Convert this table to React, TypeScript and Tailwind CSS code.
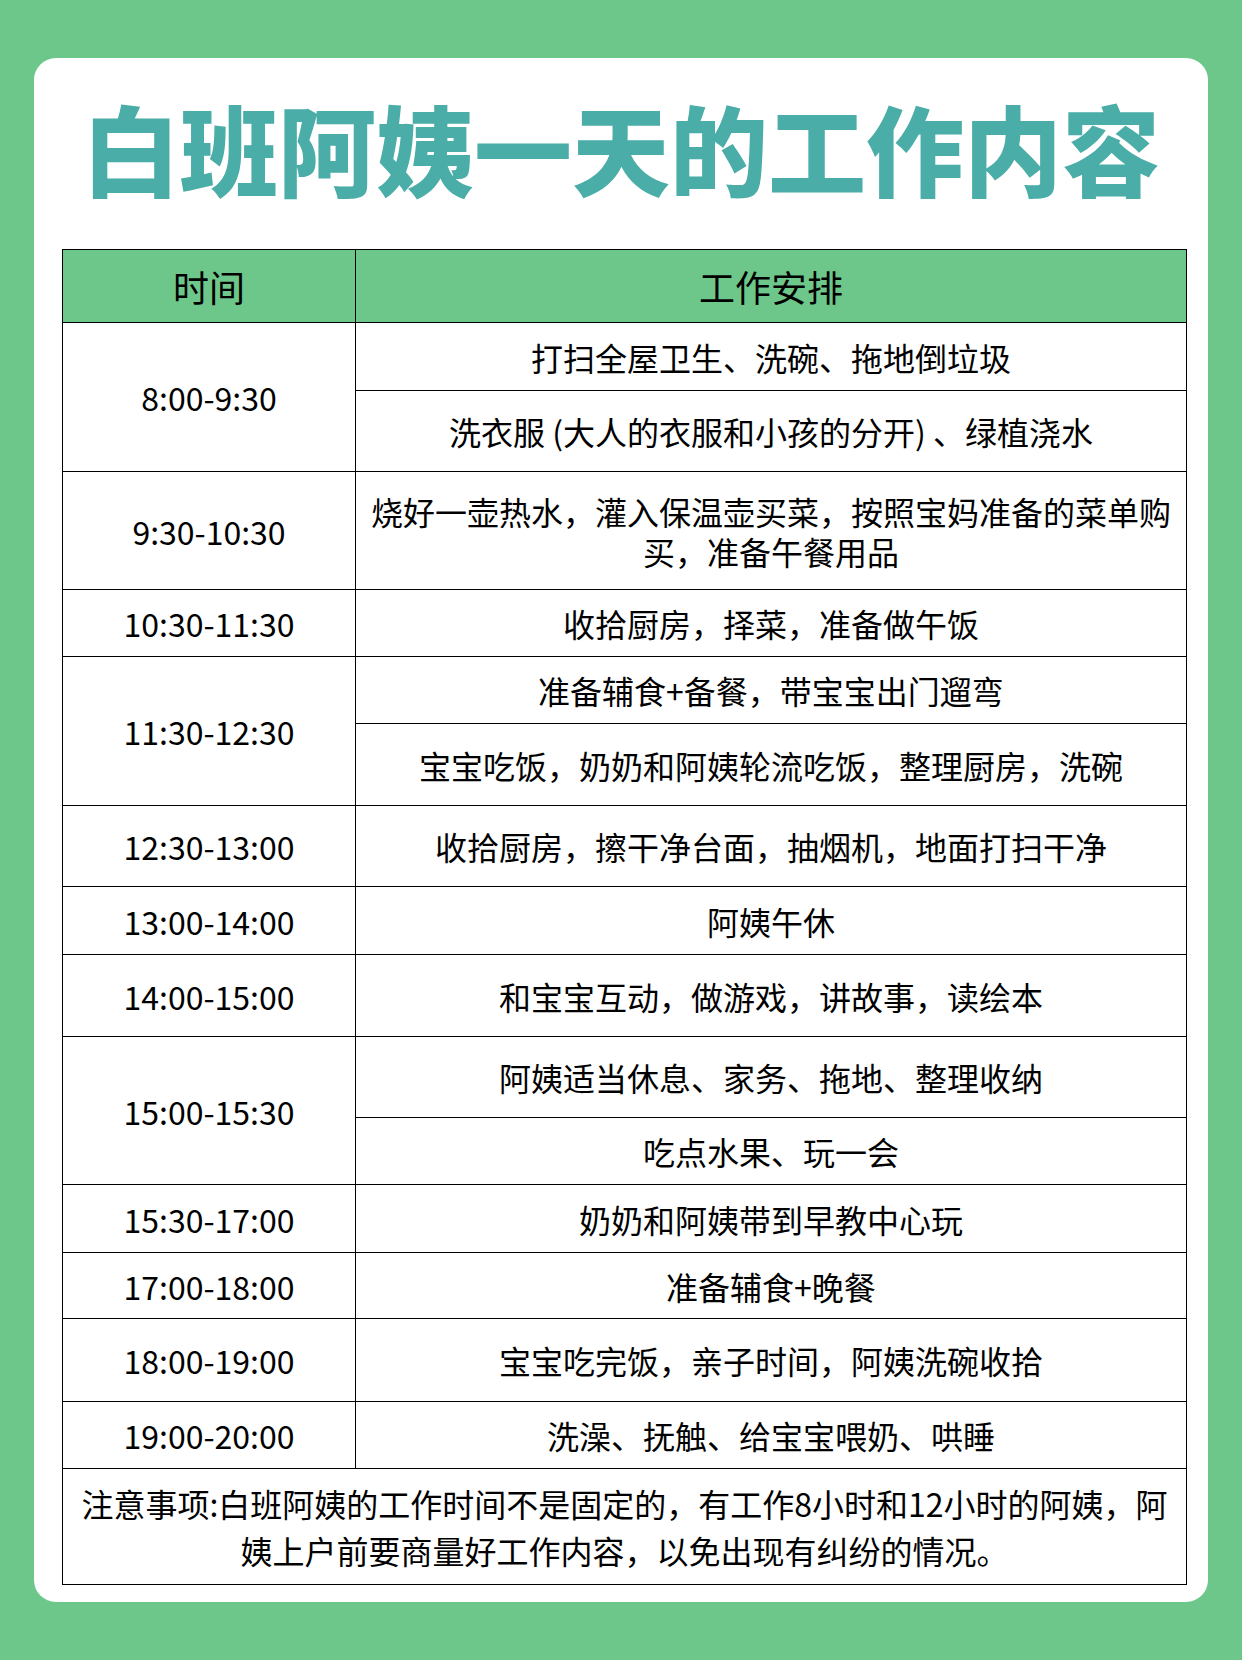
import React from "react";

type Group = { time: string; items: { text: React.ReactNode; h: number; lh?: string }[] };

const groups: Group[] = [
  { time: "8:00-9:30", items: [
    { text: "打扫全屋卫生、洗碗、拖地倒垃圾", h: 68 },
    { text: "洗衣服 (大人的衣服和小孩的分开) 、绿植浇水", h: 80 },
  ] },
  { time: "9:30-10:30", items: [
    { text: <>烧好一壶热水，灌入保温壶买菜，按照宝妈准备的菜单购<br />买，准备午餐用品</>, h: 117, lh: "leading-[40px]" },
  ] },
  { time: "10:30-11:30", items: [{ text: "收拾厨房，择菜，准备做午饭", h: 66 }] },
  { time: "11:30-12:30", items: [
    { text: "准备辅食+备餐，带宝宝出门遛弯", h: 67 },
    { text: "宝宝吃饭，奶奶和阿姨轮流吃饭，整理厨房，洗碗", h: 81 },
  ] },
  { time: "12:30-13:00", items: [{ text: "收拾厨房，擦干净台面，抽烟机，地面打扫干净", h: 80 }] },
  { time: "13:00-14:00", items: [{ text: "阿姨午休", h: 67 }] },
  { time: "14:00-15:00", items: [{ text: "和宝宝互动，做游戏，讲故事，读绘本", h: 81 }] },
  { time: "15:00-15:30", items: [
    { text: "阿姨适当休息、家务、拖地、整理收纳", h: 81 },
    { text: "吃点水果、玩一会", h: 66 },
  ] },
  { time: "15:30-17:00", items: [{ text: "奶奶和阿姨带到早教中心玩", h: 67 }] },
  { time: "17:00-18:00", items: [{ text: "准备辅食+晚餐", h: 65 }] },
  { time: "18:00-19:00", items: [{ text: "宝宝吃完饭，亲子时间，阿姨洗碗收拾", h: 82 }] },
  { time: "19:00-20:00", items: [{ text: "洗澡、抚触、给宝宝喂奶、哄睡", h: 66 }] },
];

export default function App() {
  return (
    <div className="w-[1242px] h-[1660px] bg-[#6ec78a] pt-[58px] px-[34px] font-['Noto_Sans_CJK_SC','Noto_Sans',sans-serif] text-black">
      <div className="h-[1544px] bg-white rounded-[22px] flex flex-col">
        <div className="mt-[38px] h-[100px] leading-[100px] text-center text-[98px] font-black text-[#4aada7] whitespace-nowrap">
          白班阿姨一天的工作内容
        </div>
        <div className="mt-[53px] ml-[28px] mr-[21px] border border-black">
          <div className="flex h-[73px] bg-[#6ec78a] border-b border-black text-[36px]">
            <div className="w-[293px] border-r border-black flex items-center justify-center">时间</div>
            <div className="flex-1 flex items-center justify-center">工作安排</div>
          </div>
          {groups.map((g) => (
            <div key={g.time} className="flex border-b border-black text-[32px]">
              <div className="w-[293px] border-r border-black flex items-center justify-center">{g.time}</div>
              <div className="flex-1 flex flex-col">
                {g.items.map((it, i) => (
                  <div
                    key={i}
                    style={{ height: it.h }}
                    className={`flex items-center justify-center text-center px-[6px] whitespace-nowrap ${i < g.items.length - 1 ? "border-b border-black" : ""} ${it.lh ?? ""}`}
                  >
                    <div>{it.text}</div>
                  </div>
                ))}
              </div>
            </div>
          ))}
          <div className="h-[115px] flex items-center justify-center text-center text-[32px] leading-[47px] px-[10px] whitespace-nowrap">
            <div>
              注意事项:白班阿姨的工作时间不是固定的，有工作8小时和12小时的阿姨，阿
              <br />
              姨上户前要商量好工作内容，以免出现有纠纷的情况。
            </div>
          </div>
        </div>
      </div>
    </div>
  );
}
